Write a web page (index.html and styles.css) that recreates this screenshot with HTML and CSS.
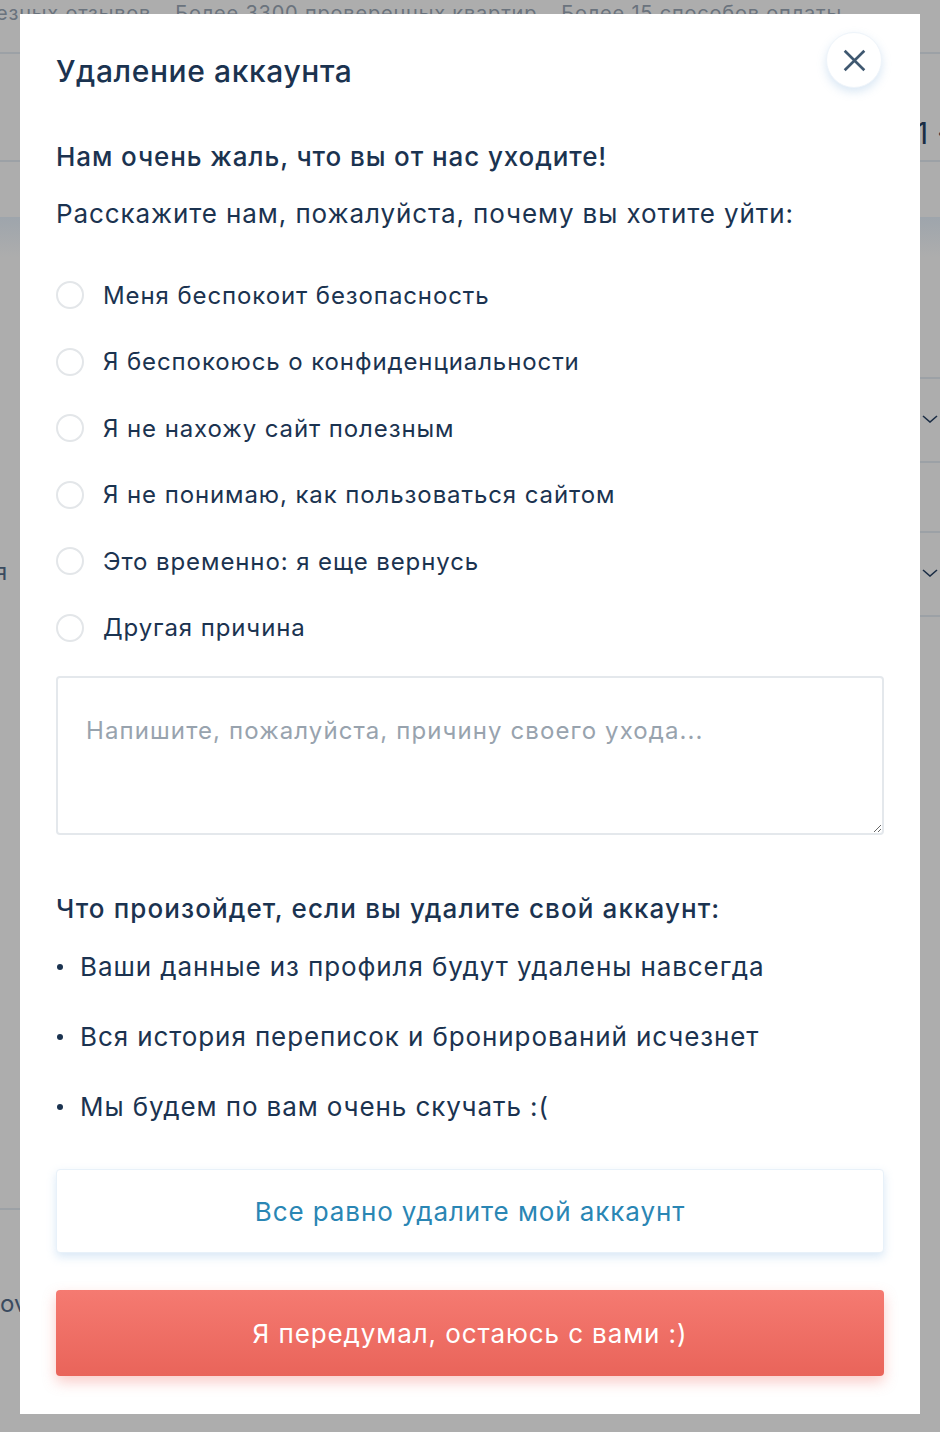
FILE: index.html
```html
<!DOCTYPE html>
<html lang="ru">
<head>
<meta charset="UTF-8">
<meta name="viewport" content="width=device-width, initial-scale=1.0">
<title>Удаление аккаунта</title>
<link rel="stylesheet" href="styles.css">
</head>
<body>

<div class="page">
    <div class="promo">
        <span>езных отзывов</span>
        <span>Более 3300 проверенных квартир</span>
        <span>Более 15 способов оплаты</span>
    </div>
    <div class="header">
        <span class="price">1 ·</span>
    </div>
    <div class="tabs"></div>
    <div class="content">
        <div class="side-left">
            <div class="label-row">я</div>
            <div class="left-line"></div>
            <div class="label-row">ov</div>
        </div>
        <div class="side-right">
            <div class="row row-first">
                <svg class="chevron" viewBox="0 0 16 8"><path d="M1 1l7 6 7-6" fill="none" stroke="#1b2d45" stroke-width="1.6"/></svg>
            </div>
            <div class="row row-short"></div>
            <div class="row row-mid">
                <svg class="chevron" viewBox="0 0 16 8"><path d="M1 1l7 6 7-6" fill="none" stroke="#1b2d45" stroke-width="1.6"/></svg>
            </div>
        </div>
    </div>
</div>

<div class="modal">
    <button class="modal-close" aria-label="Закрыть">
        <svg viewBox="0 0 28 28"><path d="M3 3l22 22M25 3L3 25" stroke="#3f5870" stroke-width="3" fill="none"/></svg>
    </button>
    <h2 class="modal-title">Удаление аккаунта</h2>

    <h3 class="subtitle">Нам очень жаль, что вы от нас уходите!</h3>
    <p class="lead">Расскажите нам, пожалуйста, почему вы хотите уйти:</p>

    <form class="reasons">
        <label class="reason"><input type="radio" name="reason"><span class="radio"></span>Меня беспокоит безопасность</label>
        <label class="reason"><input type="radio" name="reason"><span class="radio"></span>Я беспокоюсь о конфиденциальности</label>
        <label class="reason"><input type="radio" name="reason"><span class="radio"></span>Я не нахожу сайт полезным</label>
        <label class="reason"><input type="radio" name="reason"><span class="radio"></span>Я не понимаю, как пользоваться сайтом</label>
        <label class="reason"><input type="radio" name="reason"><span class="radio"></span>Это временно: я еще вернусь</label>
        <label class="reason"><input type="radio" name="reason"><span class="radio"></span>Другая причина</label>
        <textarea class="comment" placeholder="Напишите, пожалуйста, причину своего ухода..."></textarea>
    </form>

    <h3 class="subtitle consequences-title">Что произойдет, если вы удалите свой аккаунт:</h3>
    <ul class="consequences">
        <li>Ваши данные из профиля будут удалены навсегда</li>
        <li>Вся история переписок и бронирований исчезнет</li>
        <li>Мы будем по вам очень скучать :(</li>
    </ul>

    <button class="btn btn-delete">Все равно удалите мой аккаунт</button>
    <button class="btn btn-stay">Я передумал, остаюсь с вами :)</button>
</div>

</body>
</html>
```

FILE: styles.css
```css
body {
    margin: 0;
    background-color: #adadad;
    font-family: Inter, "Noto Sans", sans-serif;
    color: #1b3350;
    overflow: hidden;
}

/* dimmed page behind the dialog */
.page {
    height: 1432px;
}
.promo {
    display: flex;
    gap: 24px;
    height: 54px;
    box-sizing: border-box;
    padding-top: 3px;
    border-bottom: 2px solid #9ca1a6;
    color: #6a737d;
    font-size: 20px;
    letter-spacing: 0.8px;
    line-height: 20px;
    white-space: nowrap;
}
.promo span:first-child {
    margin-left: -4px;
}
.header {
    height: 108px;
    box-sizing: border-box;
    border-bottom: 2px solid #9ca1a6;
    padding: 64px 0 0 916px;
}
.price {
    display: block;
    font-size: 30px;
    line-height: 30px;
    color: #1b2d45;
    white-space: nowrap;
}
.tabs {
    height: 55px;
}
.content {
    display: flex;
    justify-content: space-between;
    height: 1200px;
    background: linear-gradient(#9ea5ac, #adadad 40px);
}
.side-left {
    width: 20px;
    padding-top: 343px;
}
.label-row {
    font-size: 24px;
    color: #3a4b60;
    white-space: nowrap;
    line-height: 24px;
}
.label-row:first-child {
    margin-left: -6px;
}
.left-line {
    height: 2px;
    width: 20px;
    margin-top: 624px;
    margin-bottom: 82px;
    background-color: #9ca1a6;
}
.side-right {
    width: 20px;
    padding-top: 160px;
}
.row {
    display: flex;
    align-items: center;
    box-sizing: border-box;
    border-top: 2px solid #9ca1a6;
}
.row-first {
    height: 84px;
}
.row-short {
    height: 70px;
}
.row-mid {
    height: 86px;
    border-bottom: 2px solid #9ca1a6;
}
.chevron {
    width: 16px;
    height: 8px;
    margin: 0 0 2px 2px;
}

/* dialog */
.modal {
    position: absolute;
    top: 14px;
    left: 20px;
    width: 828px;
    height: 1400px;
    padding: 0 36px;
    background-color: #fff;
    letter-spacing: 0.9px;
}
.modal-close {
    position: absolute;
    top: 18px;
    right: 38px;
    width: 56px;
    height: 56px;
    border: 1px solid #eef4fa;
    border-radius: 50%;
    background-color: #fff;
    box-shadow: 0 4px 10px rgba(120, 170, 215, 0.28);
    display: flex;
    align-items: center;
    justify-content: center;
    padding: 0;
}
.modal-close svg {
    width: 25px;
    height: 25px;
}
.modal-title {
    margin: 39px 0 0;
    font-size: 30px;
    font-weight: 500;
    line-height: 36px;
    letter-spacing: 0.6px;
}
.subtitle {
    margin: 51px 0 0;
    font-size: 26px;
    font-weight: 500;
    line-height: 34px;
}
.lead {
    margin: 23px 0 0;
    font-size: 26px;
    line-height: 34px;
}
.reasons {
    margin-top: 31px;
}
.reason {
    display: flex;
    align-items: center;
    height: 66.5px;
    font-size: 24px;
}
.reason input {
    display: none;
}
.radio {
    width: 24px;
    height: 24px;
    border: 2px solid #e3e6e9;
    border-radius: 50%;
    margin-right: 19px;
}
.comment {
    display: block;
    width: 100%;
    height: 159px;
    margin-top: 15px;
    padding: 37px 28px;
    box-sizing: border-box;
    border: 2px solid #e4e8ec;
    border-radius: 4px;
    font-family: inherit;
    font-size: 24px;
    line-height: 32px;
    letter-spacing: 1.1px;
    color: #1b3350;
    resize: vertical;
}
.comment::placeholder {
    color: #98a3ae;
}
.consequences-title {
    margin-top: 57px;
    letter-spacing: 1.1px;
}
.consequences {
    list-style: none;
    margin: 23px 0 0;
    padding: 0;
}
.consequences li {
    position: relative;
    padding-left: 24px;
    font-size: 26px;
    line-height: 36px;
    margin-bottom: 34px;
}
.consequences li:last-child {
    margin-bottom: 0;
}
.consequences li::before {
    content: "";
    position: absolute;
    left: 1px;
    top: 15px;
    width: 6px;
    height: 6px;
    border-radius: 50%;
    background-color: #1b3350;
}
.btn {
    display: block;
    width: 100%;
    border-radius: 4px;
    font-family: inherit;
    font-size: 26px;
    letter-spacing: 0.9px;
    cursor: pointer;
}
.btn-delete {
    height: 84px;
    margin-top: 44px;
    border: 1px solid #e8f1f9;
    background-color: #fff;
    color: #2a86b4;
    box-shadow: 0 4px 10px rgba(130, 180, 225, 0.3);
}
.btn-stay {
    height: 86px;
    margin-top: 37px;
    border: 0;
    background: linear-gradient(#f57a71, #e9645a);
    color: #fff;
    box-shadow: 0 6px 14px rgba(240, 110, 100, 0.35);
}
```
